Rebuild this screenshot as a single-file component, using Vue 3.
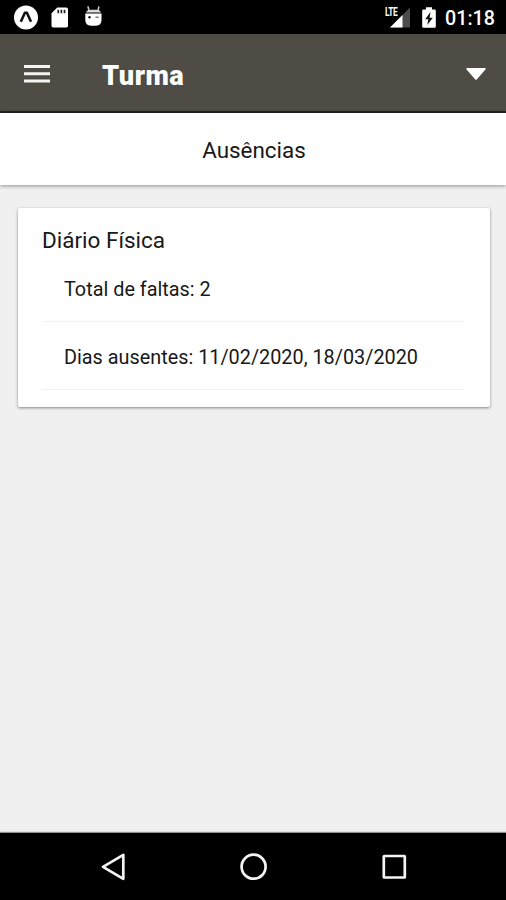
<script setup>
const absence = {
  diary: 'Diário Física',
  rows: ['Total de faltas: 2', 'Dias ausentes: 11/02/2020, 18/03/2020']
}
</script>

<template>
  <div class="screen">
    <div class="status">
      <svg class="status-left" width="110" height="34" viewBox="0 0 110 34">
        <circle cx="26" cy="17.5" r="12" fill="#fff" />
        <path d="M20.8 21.8 L24.9 12.8 H26.9 L31 21.8" fill="none" stroke="#111" stroke-width="2.6" stroke-linejoin="round" />
        <path d="M57.3 7.5 H66.3 Q68 7.5 68 9.2 V25.8 Q68 27.5 66.3 27.5 H53.2 Q51.5 27.5 51.5 25.8 V13.3 Z" fill="#fff" />
        <path d="M58.3 9.8V13.2 M61.4 9.8V13.2 M64.5 9.8V13.2" stroke="#222" stroke-width="1.7" />
        <path d="M85.3 13.5 H101.5 V20 Q101.5 25.7 96 25.7 H91 Q85.3 25.7 85.3 20 Z" fill="#fff" />
        <path d="M87.9 6.3 L89.2 11.5 M98.9 6.3 L97.8 11.5" stroke="#ccc" stroke-width="1.5" />
        <path d="M86 12.6 Q87 9.6 91 9.8 H96 Q100 9.6 101 12.6 Z" fill="#ddd" />
        <circle cx="89.5" cy="17.2" r="1.2" fill="#111" />
        <path d="M95.5 17.2H98.6" stroke="#555" stroke-width="1.2" />
      </svg>
      <div class="status-right">
        <span class="lte">LTE</span>
        <svg width="24" height="34" viewBox="0 0 24 34">
          <path d="M23 7.5 V27.5 H3 Z" fill="#4b4b4b" />
          <path d="M15.5 15 V27.5 H3 Z" fill="#fff" />
        </svg>
        <svg class="battery" width="16" height="34" viewBox="0 0 16 34">
          <path d="M5 7.2 H11 V9.5 H13.5 Q14.8 9.5 14.8 10.8 V26.5 Q14.8 27.8 13.5 27.8 H2.5 Q1.2 27.8 1.2 26.5 V10.8 Q1.2 9.5 2.5 9.5 H5 Z" fill="#fff" />
          <path d="M9.5 12 L4.2 19.2 H7.3 L6.3 25 L11.8 17.7 H8.6 Z" fill="#111" />
        </svg>
        <span class="clock">01:18</span>
      </div>
    </div>

    <header class="appbar">
      <svg class="menu" width="26" height="20" viewBox="0 0 26 20">
        <path d="M0 2.5H26 M0 9.8H26 M0 17H26" stroke="#f5f4f2" stroke-width="3.1" />
      </svg>
      <h1>Turma</h1>
      <svg class="caret" width="22" height="14" viewBox="0 0 22 14">
        <path d="M2 1 H20 Q21.3 1.3 20.4 2.5 L12 12.3 Q11 13.3 10 12.3 L1.6 2.5 Q.7 1.3 2 1 Z" fill="#fff" />
      </svg>
    </header>

    <div class="section-title"><span>Ausências</span></div>

    <main>
      <section class="card">
        <h2><span>{{ absence.diary }}</span></h2>
        <div v-for="row in absence.rows" :key="row" class="row"><span>{{ row }}</span></div>
      </section>
    </main>

    <nav>
      <svg width="506" height="67" viewBox="0 0 506 67">
        <g fill="none" stroke="#f4f4f4" stroke-width="2.7" stroke-linejoin="round">
          <path d="M103 33.8 L123.3 21.8 V45.8 Z" />
          <circle cx="253.6" cy="33.7" r="12" />
          <rect x="383.8" y="23" width="21" height="21.5" rx=".5" />
        </g>
      </svg>
    </nav>
  </div>
</template>

<style>
body { margin: 0; }
</style>

<style scoped>
.screen {
  width: 506px;
  height: 900px;
  display: flex;
  flex-direction: column;
  overflow: hidden;
  background: #f0f0f0;
  color: #181818;
  font-family: Roboto, "Liberation Sans", sans-serif;
}
.status {
  height: 34px;
  flex: none;
  display: flex;
  justify-content: space-between;
  background: #000;
  color: #fff;
}
.status-right {
  display: flex;
  padding-right: 11px;
}
.lte {
  width: 14px;
  height: 15px;
  margin-right: -12px;
  padding-top: 4px;
  font-size: 13px;
  font-weight: 700;
  line-height: 15px;
  letter-spacing: -.5px;
  transform: scaleX(.64);
  transform-origin: left;
}
.battery { margin-left: 10px; }
.clock {
  font-size: 19.7px;
  font-weight: 500;
  line-height: 38px;
  height: 34px;
  margin-left: 8px;
}
.appbar {
  box-sizing: border-box;
  height: 79px;
  flex: none;
  display: flex;
  align-items: center;
  padding: 2px 19px 0 24px;
  background: #4f4c45;
  border-bottom: 2px solid #24221f;
  color: #fff;
}
h1 {
  margin: 4px 0 0 52px;
  font-size: 27.2px;
  line-height: 32px;
  font-weight: 900;
  letter-spacing: .5px;
}
.caret { margin-left: auto; }
.section-title {
  height: 72px;
  flex: none;
  padding-left: 2px;
  background: #fff;
  box-shadow: 0 1px 4px rgba(0, 0, 0, .4);
  text-align: center;
  font-size: 22.4px;
  line-height: 75px;
}
main {
  flex: 1;
  padding: 23px 16px 0 18px;
}
.card {
  box-sizing: border-box;
  height: 199px;
  padding: 12px 26px 0 24px;
  background: #fff;
  border-radius: 2px;
  box-shadow: 0 1px 3px rgba(0, 0, 0, .45);
}
h2 {
  margin: 0;
  font-size: 22.5px;
  line-height: 40px;
  height: 34px;
  font-weight: 400;
}
.row {
  box-sizing: border-box;
  height: 68px;
  padding: 4px 0 0 22px;
  line-height: 63px;
  font-size: 19.83px;
  border-bottom: 1px solid #f1f1f1;
  white-space: nowrap;
}
nav {
  height: 67px;
  flex: none;
  background: #000;
  box-shadow: 0 -1px 1px rgba(0, 0, 0, .4);
}
nav svg { display: block; }
</style>
